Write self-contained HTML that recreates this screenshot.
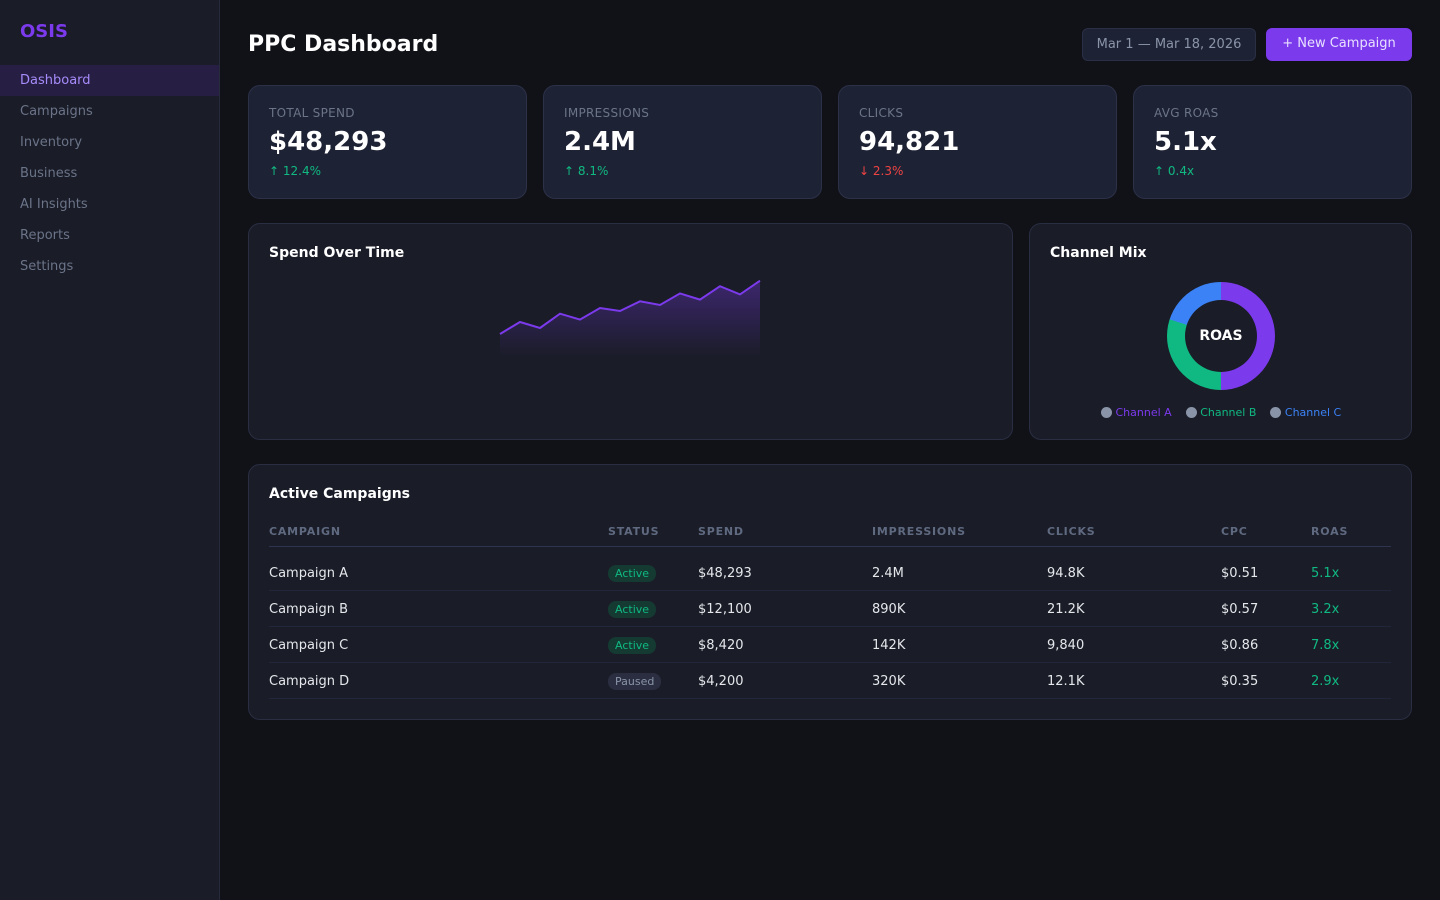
<!DOCTYPE html>
<html><head><meta charset="utf-8"><style>
*{box-sizing:border-box;margin:0;padding:0}
body{width:1440px;height:900px;background:#111218;font-family:"DejaVu Sans",sans-serif;color:#e5e7eb;position:relative;overflow:hidden}
.side{position:absolute;left:0;top:0;width:220px;height:900px;background:#1a1c28;border-right:1px solid #262a3d}
.logo{position:absolute;left:20px;top:21px;font-size:18px;font-weight:bold;color:#7c3aed}
.nav{position:absolute;top:65px;left:0;width:219px}
.nav div{height:31px;line-height:32px;padding-left:20px;font-size:13px;color:#6b7488}
.nav .act{background:#261f43;color:#a78bfa}
.abs{position:absolute}
h1{position:absolute;left:248px;top:32px;font-size:22px;font-weight:bold;color:#fff}
.date{left:1082px;top:28px;width:174px;height:33px;border:1px solid #2a2f45;border-radius:6px;background:#1e2235;color:#8a94a8;font-size:13px;text-align:center;line-height:32px}
.btn{left:1266px;top:28px;width:146px;height:33px;border-radius:6px;background:#7c3aed;color:#e8e0ff;font-size:13px;text-align:center;line-height:32px}
.card{position:absolute;background:#1e2235;border:1px solid #2c3148;border-radius:12px}
.card2{position:absolute;background:#1a1c28;border:1px solid #2a2e42;border-radius:12px}
.lab{position:absolute;left:20px;top:20px;font-size:12px;color:#6b7488;letter-spacing:.3px}
.val{position:absolute;left:20px;top:41px;font-size:26px;font-weight:bold;color:#fff}
.chg{position:absolute;left:20px;top:78px;font-size:12px}
.g{color:#10b981}.r{color:#ef4444}
.ct{position:absolute;left:20px;top:21px;font-size:14px;font-weight:bold;color:#fff}
.th{position:absolute;top:525px;font-size:11px;font-weight:bold;color:#5f6a80;letter-spacing:.8px}
.td{position:absolute;font-size:13px;color:#e5e7eb}
.hl{position:absolute;left:269px;width:1122px;height:1px}
.pill{position:absolute;left:608px;height:17px;border-radius:8px;font-size:11px;line-height:17px;padding:0 7px}
</style></head><body>
<div class="side"><div class="logo">OSIS</div>
<div class="nav"><div class="act">Dashboard</div><div>Campaigns</div><div>Inventory</div><div>Business</div><div>AI Insights</div><div>Reports</div><div>Settings</div></div></div>
<h1>PPC Dashboard</h1>
<div class="abs date">Mar 1 — Mar 18, 2026</div>
<div class="abs btn">+ New Campaign</div>

<div class="card" style="left:248px;top:85px;width:279px;height:114px"><div class="lab">TOTAL SPEND</div><div class="val">$48,293</div><div class="chg g">↑ 12.4%</div></div>
<div class="card" style="left:543px;top:85px;width:279px;height:114px"><div class="lab">IMPRESSIONS</div><div class="val">2.4M</div><div class="chg g">↑ 8.1%</div></div>
<div class="card" style="left:838px;top:85px;width:279px;height:114px"><div class="lab">CLICKS</div><div class="val">94,821</div><div class="chg r">↓ 2.3%</div></div>
<div class="card" style="left:1133px;top:85px;width:279px;height:114px"><div class="lab">AVG ROAS</div><div class="val">5.1x</div><div class="chg g">↑ 0.4x</div></div>

<div class="card2" style="left:248px;top:223px;width:765px;height:217px"><div class="ct">Spend Over Time</div></div>
<svg class="abs" style="left:0;top:0" width="1440" height="900">
<defs><linearGradient id="f" x1="0" y1="0" x2="0" y2="1"><stop offset="0" stop-color="#7c3aed" stop-opacity=".35"/><stop offset="1" stop-color="#7c3aed" stop-opacity="0"/></linearGradient></defs>
<path d="M500,334 L520,322 L540,328 L560,313.7 L580,319.6 L600,308 L620,311 L640,301.3 L660,305 L680,293.4 L700,299.6 L720,286.2 L740,294.4 L760,280.7 L760,358 L500,358Z" fill="url(#f)"/>
<polyline points="500,334 520,322 540,328 560,313.7 580,319.6 600,308 620,311 640,301.3 660,305 680,293.4 700,299.6 720,286.2 740,294.4 760,280.7" fill="none" stroke="#7c3aed" stroke-width="2"/>
</svg>

<div class="card2" style="left:1029px;top:223px;width:383px;height:217px"><div class="ct">Channel Mix</div></div>
<div class="abs" style="left:1167px;top:282px;width:108px;height:108px;border-radius:50%;background:conic-gradient(#7c3aed 0 50%,#10b981 50% 80%,#3b82f6 80% 100%)"></div>
<div class="abs" style="left:1185px;top:300px;width:72px;height:72px;border-radius:50%;background:#1a1c28;text-align:center;line-height:73px;font-weight:bold;font-size:14px;color:#fff">ROAS</div>
<div class="abs" style="left:1101px;top:406px;font-size:11px;white-space:nowrap">
<span style="display:inline-block;width:11px;height:11px;border-radius:50%;background:#8a94a8;vertical-align:-2px"></span> <span style="color:#7c3aed">Channel A</span>&nbsp;&nbsp;&nbsp;
<span style="display:inline-block;width:11px;height:11px;border-radius:50%;background:#8a94a8;vertical-align:-2px"></span> <span style="color:#10b981">Channel B</span>&nbsp;&nbsp;&nbsp;
<span style="display:inline-block;width:11px;height:11px;border-radius:50%;background:#8a94a8;vertical-align:-2px"></span> <span style="color:#3b82f6">Channel C</span></div>

<div class="card2" style="left:248px;top:464px;width:1164px;height:256px"><div class="ct" style="top:21px">Active Campaigns</div></div>
<div class="th" style="left:269px">CAMPAIGN</div><div class="th" style="left:608px">STATUS</div><div class="th" style="left:698px">SPEND</div><div class="th" style="left:872px">IMPRESSIONS</div><div class="th" style="left:1047px">CLICKS</div><div class="th" style="left:1221px">CPC</div><div class="th" style="left:1311px">ROAS</div>
<div class="hl" style="top:546px;background:#2e3450"></div>
<div class="hl" style="top:590px;background:#22263a"></div>
<div class="hl" style="top:626px;background:#22263a"></div>
<div class="hl" style="top:662px;background:#22263a"></div>
<div class="hl" style="top:698px;background:#22263a"></div>

<div class="td" style="left:269px;top:566px">Campaign A</div><div class="pill" style="top:565px;background:#143a32;color:#10b981">Active</div><div class="td" style="left:698px;top:566px">$48,293</div><div class="td" style="left:872px;top:566px">2.4M</div><div class="td" style="left:1047px;top:566px">94.8K</div><div class="td" style="left:1221px;top:566px">$0.51</div><div class="td" style="left:1311px;top:566px;color:#10b981">5.1x</div>
<div class="td" style="left:269px;top:602px">Campaign B</div><div class="pill" style="top:601px;background:#143a32;color:#10b981">Active</div><div class="td" style="left:698px;top:602px">$12,100</div><div class="td" style="left:872px;top:602px">890K</div><div class="td" style="left:1047px;top:602px">21.2K</div><div class="td" style="left:1221px;top:602px">$0.57</div><div class="td" style="left:1311px;top:602px;color:#10b981">3.2x</div>
<div class="td" style="left:269px;top:638px">Campaign C</div><div class="pill" style="top:637px;background:#143a32;color:#10b981">Active</div><div class="td" style="left:698px;top:638px">$8,420</div><div class="td" style="left:872px;top:638px">142K</div><div class="td" style="left:1047px;top:638px">9,840</div><div class="td" style="left:1221px;top:638px">$0.86</div><div class="td" style="left:1311px;top:638px;color:#10b981">7.8x</div>
<div class="td" style="left:269px;top:674px">Campaign D</div><div class="pill" style="top:673px;background:#2a2e40;color:#8a94a8">Paused</div><div class="td" style="left:698px;top:674px">$4,200</div><div class="td" style="left:872px;top:674px">320K</div><div class="td" style="left:1047px;top:674px">12.1K</div><div class="td" style="left:1221px;top:674px">$0.35</div><div class="td" style="left:1311px;top:674px;color:#10b981">2.9x</div>
</body></html>
